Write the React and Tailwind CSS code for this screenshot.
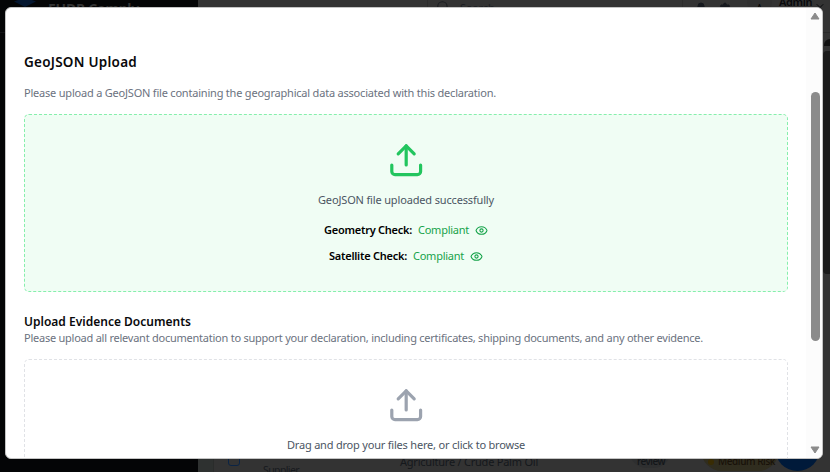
import React from "react";
import { Upload, Eye, Search, Bell, Settings, ChevronDown } from "lucide-react";

// One line of text, tracked to an exact advance width.
function Line({ text, width, className }) {
  const ref = React.useRef(null);
  React.useLayoutEffect(() => {
    const el = ref.current;
    el.style.letterSpacing = "0px";
    const natural = el.getBoundingClientRect().width;
    el.style.letterSpacing = (width - natural) / text.length + "px";
  }, [text, width]);
  return (
    <p ref={ref} className={"w-fit shrink-0 whitespace-nowrap " + className}>
      {text}
    </p>
  );
}

function Check({ label, width }) {
  return (
    <div className="flex h-[26px] items-center justify-center gap-1.5">
      <Line text={label} width={width} className="text-[11px] font-semibold text-black" />
      <Line text="Compliant" width={51} className="text-[11px] text-[#16a34a]" />
      <Eye className="h-[13px] w-[13px] text-[#16a34a]" strokeWidth={2} />
    </div>
  );
}

function Sidebar() {
  return (
    <aside className="w-[198px] shrink-0 bg-[#040506]">
      <div className="flex h-[33px] items-start gap-3 border-b border-[#111214] pl-3.5">
        <svg className="w-[22px]" height="8" viewBox="0 0 22 8">
          <path d="M0 1.5 L4 0 H18 L22 1.5 L11 7 Z" fill="#04162f" />
        </svg>
        <Line text="EUDR Comply" width={91} className="text-[14px] font-bold leading-[18px] text-[#333333]" />
      </div>
    </aside>
  );
}

function TopBar() {
  return (
    <header className="flex h-[33px] items-start border-b border-[#292929] pl-[229px]">
      <div className="flex h-[10px] w-[256px] items-start gap-2.5 border-x border-[#2c2c2c] pl-2">
        <Search className="h-[14px] w-[14px] text-[#1c1e22]" />
        <p className="text-[11px] leading-[15px] text-[#1c1e22]">Search...</p>
      </div>
      <div className="flex items-start gap-3 pl-3 pt-0.5">
        <Bell className="h-[12px] w-[12px] fill-[#15181d] text-[#15181d]" />
        <Settings className="h-[12px] w-[12px] fill-[#15181d] text-[#15181d]" />
      </div>
      <div className="ml-4 flex h-[14px] w-[25px] justify-center rounded-b-full bg-[#303030] pt-[3px] text-[10px] leading-[11px] text-[#050505]">
        A
      </div>
      <div className="flex items-start gap-0.5 pl-[7px]">
        <Line text="Admin" width={33} className="-mt-1.5 text-[11px] font-semibold leading-[15px] text-[#08090c]" />
        <ChevronDown className="h-[12px] w-[12px] text-[#08090c]" />
      </div>
    </header>
  );
}

function PageScrollbar() {
  return (
    <div className="flex flex-1 flex-col items-end pt-[6px]">
      <div className="h-[7px] w-[6px] rounded-tl-md bg-[#111111]" />
      <div className="mt-[5px] h-[223px] w-[7px] rounded-l bg-[#1b1b1b]" />
    </div>
  );
}

function SupplierRow() {
  return (
    <div className="flex h-[22px] items-start overflow-hidden">
      <div className="h-full w-[16px] border-r border-[#2a2c2b] bg-[#2e3130]" />
      <div className="ml-3.5 mt-1 h-[12px] w-[12px] rounded-[3px] border border-[#0b2445]" />
      <Line text="Supplier" width={36} className="ml-[23px] mt-[13px] text-[10.5px] leading-[15px] text-[#171a1e]" />
      <Line
        text="Agriculture / Crude Palm Oil"
        width={138}
        className="ml-[101px] mt-[4px] text-[11px] leading-[15px] text-[#15181c]"
      />
      <div className="ml-[91px] h-[18px] w-[42px] rounded-b-full bg-[#2e2f30] pl-2 pt-[5px]">
        <Line text="review" width={28} className="text-[10px] font-medium leading-[13px] text-[#131619]" />
      </div>
      <div className="ml-[30px] flex h-[21px] w-[78px] items-center gap-1 rounded-b-full bg-[#302d1f] pl-[7px] pt-[2px]">
        <div className="h-[6px] w-[6px] rounded-full bg-[#392c04]" />
        <Line text="Medium Risk" width={57} className="text-[10px] font-medium leading-[13px] text-[#181109]" />
      </div>
      <div className="-ml-1 -mt-6 h-[45px] w-[45px] shrink-0 rounded-full bg-[#001a3a]" />
    </div>
  );
}

function DialogScrollbar() {
  return (
    <div className="flex w-[16px] shrink-0 flex-col items-center bg-[#fcfcfc] pl-[2px]">
      <svg className="mt-[4px] h-[8px] w-[10px]" viewBox="0 0 10 8">
        <path d="M5 1 L9 7 H1 Z" fill="#8b8b8b" stroke="#8b8b8b" strokeLinejoin="round" />
      </svg>
      <div className="mt-[72px] h-[249px] w-[9px] rounded-full bg-[#8b8b8b]" />
      <svg className="mt-[105px] h-[8px] w-[10px]" viewBox="0 0 10 8">
        <path d="M5 7 L9 1 H1 Z" fill="#8b8b8b" stroke="#8b8b8b" strokeLinejoin="round" />
      </svg>
    </div>
  );
}

function Dialog() {
  return (
    <div className="absolute left-[5px] top-[7px] flex h-[452px] w-[818px] overflow-hidden rounded-[6px] border border-[#c4c4c4] bg-white">
      <div className="flex flex-1 flex-col px-[18px] pt-[43px]">
        <Line text="GeoJSON Upload" width={113} className="text-[13.5px] font-semibold leading-[22px] text-[#09090b]" />
        <Line
          text="Please upload a GeoJSON file containing the geographical data associated with this declaration."
          width={472}
          className="mt-[11px] text-[11px] leading-[18px] text-[#6b7280]"
        />
        <div className="mt-[12px] flex h-[178px] shrink-0 flex-col items-center rounded-[5px] border border-dashed border-[#86efac] bg-[#f0fdf4] pt-[26px]">
          <Upload className="h-[38.4px] w-[38.4px] shrink-0 text-[#22c55e]" strokeWidth={2} />
          <Line
            text="GeoJSON file uploaded successfully"
            width={176}
            className="mt-[12px] text-[11px] leading-[18px] text-[#4b5563]"
          />
          <div className="mt-2">
            <Check label="Geometry Check:" width={88} />
            <Check label="Satellite Check:" width={78} />
          </div>
        </div>
        <Line
          text="Upload Evidence Documents"
          width={167}
          className="mt-[22px] text-[12px] font-semibold leading-[16px] text-[#09090b]"
        />
        <Line
          text="Please upload all relevant documentation to support your declaration, including certificates, shipping documents, and any other evidence."
          width={679}
          className="text-[11px] leading-[15px] text-[#6b7280]"
        />
        <div className="mt-[14px] flex h-[178px] shrink-0 flex-col items-center rounded-[5px] border border-dashed border-[#e0e2e6] pt-[26px]">
          <Upload className="h-[38.4px] w-[38.4px] shrink-0 text-[#9ca3af]" strokeWidth={2} />
          <Line
            text="Drag and drop your files here, or click to browse"
            width={238}
            className="mt-[12px] text-[11px] leading-[18px] text-[#4b5563]"
          />
        </div>
      </div>
      <DialogScrollbar />
    </div>
  );
}

export default function App() {
  return (
    <div className="relative flex h-[472px] w-[830px] overflow-hidden bg-[#333333] font-['Noto_Sans','Open_Sans',sans-serif]">
      <Sidebar />
      <main className="flex min-w-0 flex-1 flex-col">
        <TopBar />
        <PageScrollbar />
        <SupplierRow />
      </main>
      <Dialog />
    </div>
  );
}
